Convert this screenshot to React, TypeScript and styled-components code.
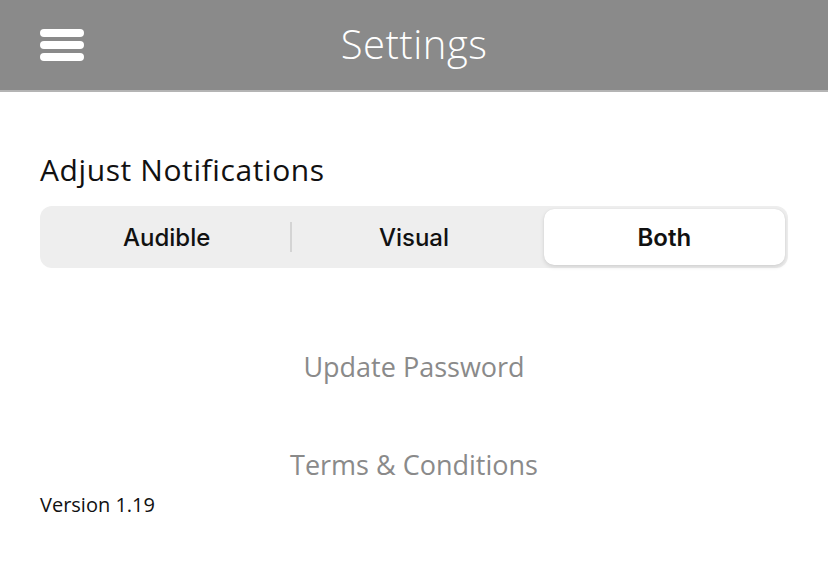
import { useState } from "react";
import styled, { createGlobalStyle } from "styled-components";

const GlobalStyle = createGlobalStyle`
  html, body {
    margin: 0;
    padding: 0;
    background: #fff;
  }
  * { box-sizing: border-box; }
`;

const options = ["Audible", "Visual", "Both"];

export default function App() {
  const [selected, setSelected] = useState(2);

  return (
    <Page>
      <GlobalStyle />
      <Header>
        <MenuButton aria-label="menu">
          <Bar />
          <Bar />
          <Bar />
        </MenuButton>
        <Title>Settings</Title>
      </Header>
      <Content>
        <SectionTitle>Adjust Notifications</SectionTitle>
        <Segmented>
          {options.map((opt, i) => (
            <Segment
              key={opt}
              $active={selected === i}
              $divider={i > 0 && selected !== i && selected !== i - 1}
              onClick={() => setSelected(i)}
            >
              {opt}
            </Segment>
          ))}
        </Segmented>
        <LinkText $top={85}>Update Password</LinkText>
        <LinkText $top={70}>Terms &amp; Conditions</LinkText>
        <Version>Version 1.19</Version>
      </Content>
    </Page>
  );
}

const Page = styled.div`
  width: 828px;
  height: 575px;
  background: #fff;
  display: flex;
  flex-direction: column;
`;

const Header = styled.header`
  height: 92px;
  background: #8a8a8a;
  border-bottom: 2px solid #b4b4b4;
  display: flex;
  align-items: center;
  justify-content: center;
  position: relative;
`;

const MenuButton = styled.div`
  position: absolute;
  left: 40px;
  top: 29px;
  width: 44px;
  display: flex;
  flex-direction: column;
  gap: 4px;
`;

const Bar = styled.div`
  height: 8px;
  border-radius: 4px;
  background: #fff;
`;

const Title = styled.h1`
  margin: 0 0 4px;
  font-family: "Open Sans", sans-serif;
  font-weight: 300;
  font-size: 40px;
  color: #fff;
  letter-spacing: 0.5px;
`;

const Content = styled.main`
  padding: 0 40px;
  display: flex;
  flex-direction: column;
`;

const SectionTitle = styled.h2`
  margin: 58px 0 0;
  font-family: "Open Sans", sans-serif;
  font-weight: 400;
  font-size: 30px;
  line-height: 40px;
  letter-spacing: 0.6px;
  color: #111;
`;

const Segmented = styled.div`
  margin-top: 16px;
  height: 62px;
  background: #eeeeee;
  border-radius: 12px;
  padding: 3px;
  display: grid;
  grid-template-columns: 1fr 1fr 1fr;
`;

const Segment = styled.div<{ $active: boolean; $divider: boolean }>`
  display: flex;
  align-items: center;
  justify-content: center;
  position: relative;
  font-family: Inter, Roboto, sans-serif;
  font-weight: ${({ $active }) => ($active ? 600 : 500)};
  font-size: 24px;
  color: #111;
  border-radius: 10px;
  margin-left: ${({ $active }) => ($active ? "6px" : "0")};
  background: ${({ $active }) => ($active ? "#fff" : "transparent")};
  box-shadow: ${({ $active }) =>
    $active ? "0 2px 4px rgba(0,0,0,0.12), 0 0 1px rgba(0,0,0,0.1)" : "none"};

  &::before {
    content: "";
    display: ${({ $divider }) => ($divider ? "block" : "none")};
    position: absolute;
    left: 0;
    top: 13px;
    bottom: 13px;
    width: 2px;
    background: #d4d4d4;
  }
`;

const LinkText = styled.div<{ $top: number }>`
  margin-top: ${({ $top }) => $top}px;
  text-align: center;
  font-family: "Open Sans", sans-serif;
  font-weight: 400;
  font-size: 27px;
  line-height: 28px;
  color: #8a8a8a;
`;

const Version = styled.div`
  margin-top: 12px;
  font-family: "Open Sans", sans-serif;
  font-size: 20px;
  color: #111;
`;
